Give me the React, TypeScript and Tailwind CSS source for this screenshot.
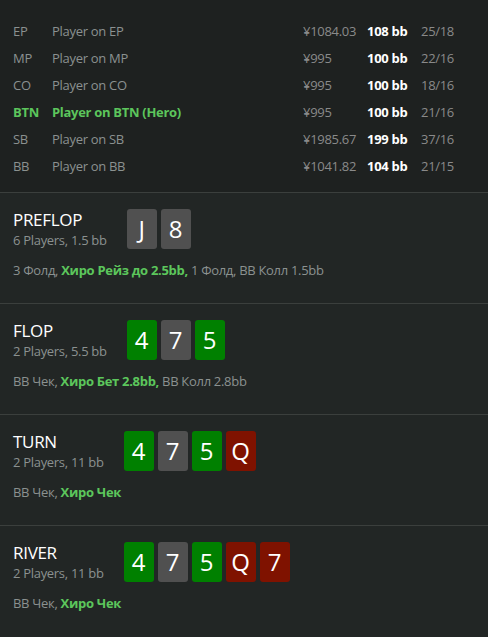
import React from 'react';

type Seat = {
  pos: string;
  name: string;
  stack: string;
  bb: string;
  stats: string;
  hero?: boolean;
};

type Card = { rank: string; color: 'gray' | 'green' | 'red' };

type Street = {
  title: string;
  info: string;
  cards: Card[];
  actions: { text: string; hero?: boolean }[];
};

const seats: Seat[] = [
  { pos: 'EP', name: 'Player on EP', stack: '¥1084.03', bb: '108 bb', stats: '25/18' },
  { pos: 'MP', name: 'Player on MP', stack: '¥995', bb: '100 bb', stats: '22/16' },
  { pos: 'CO', name: 'Player on CO', stack: '¥995', bb: '100 bb', stats: '18/16' },
  { pos: 'BTN', name: 'Player on BTN (Hero)', stack: '¥995', bb: '100 bb', stats: '21/16', hero: true },
  { pos: 'SB', name: 'Player on SB', stack: '¥1985.67', bb: '199 bb', stats: '37/16' },
  { pos: 'BB', name: 'Player on BB', stack: '¥1041.82', bb: '104 bb', stats: '21/15' },
];

const board: Card[] = [
  { rank: '4', color: 'green' },
  { rank: '7', color: 'gray' },
  { rank: '5', color: 'green' },
  { rank: 'Q', color: 'red' },
  { rank: '7', color: 'red' },
];

const streets: Street[] = [
  {
    title: 'PREFLOP',
    info: '6 Players, 1.5 bb',
    cards: [
      { rank: 'J', color: 'gray' },
      { rank: '8', color: 'gray' },
    ],
    actions: [
      { text: '3 Фолд, ' },
      { text: 'Хиро Рейз до 2.5bb,', hero: true },
      { text: ' 1 Фолд, BB Колл 1.5bb' },
    ],
  },
  {
    title: 'FLOP',
    info: '2 Players, 5.5 bb',
    cards: board.slice(0, 3),
    actions: [
      { text: 'BB Чек, ' },
      { text: 'Хиро Бет 2.8bb,', hero: true },
      { text: ' BB Колл 2.8bb' },
    ],
  },
  {
    title: 'TURN',
    info: '2 Players, 11 bb',
    cards: board.slice(0, 4),
    actions: [{ text: 'BB Чек, ' }, { text: 'Хиро Чек', hero: true }],
  },
  {
    title: 'RIVER',
    info: '2 Players, 11 bb',
    cards: board,
    actions: [{ text: 'BB Чек, ' }, { text: 'Хиро Чек', hero: true }],
  },
];

const cardBg: Record<Card['color'], string> = {
  gray: 'bg-[#505050]',
  green: 'bg-[#008000]',
  red: 'bg-[#7f1200]',
};

function PlayingCard({ card }: { card: Card }) {
  return (
    <div
      className={`w-[30px] h-[40px] rounded-[3px] flex items-center justify-center text-white text-[24px] leading-none ${cardBg[card.color]}`}
    >
      {card.rank}
    </div>
  );
}

export default function App() {
  return (
    <div
      className="w-[488px] h-[637px] overflow-hidden bg-[#222625] text-[13px] tracking-[-0.3px]"
      style={{ fontFamily: '"Open Sans", "Noto Sans", sans-serif' }}
    >
      {/* Seats */}
      <div className="bg-[#1e2120] pl-[13px] pr-[17px] pt-[18px] pb-[12px]">
        {seats.map((s) => (
          <div
            key={s.pos}
            className="grid grid-cols-[39px_1fr_64px_54px_50px] h-[27px] items-center"
          >
            <span className={s.hero ? 'text-[#5cc65c] font-bold' : 'text-[#8b9190]'}>{s.pos}</span>
            <span className={s.hero ? 'text-[#5cc65c] font-bold' : 'text-[#8b9190]'}>{s.name}</span>
            <span className="text-[#8a8a8a]">{s.stack}</span>
            <span className="text-white font-bold">{s.bb}</span>
            <span className="text-[#8a8a8a]">{s.stats}</span>
          </div>
        ))}
      </div>

      {/* Streets */}
      {streets.map((st) => (
        <div key={st.title} className="border-t border-[#3b3f3d] px-[13px] pt-4 pb-6">
          <div className="flex items-start gap-5">
            <div className="flex flex-col">
              <span className="text-white text-[17px] leading-[22px]">{st.title}</span>
              <span className="text-[#8b9190] leading-[18px]">{st.info}</span>
            </div>
            <div className="flex gap-[4px] tracking-normal">
              {st.cards.map((c, i) => (
                <PlayingCard key={i} card={c} />
              ))}
            </div>
          </div>
          <div className="mt-3 leading-[18px] text-[#8b9190]">
            {st.actions.map((a, i) => (
              <span key={i} className={a.hero ? 'text-[#5cc65c] font-bold' : ''}>
                {a.text}
              </span>
            ))}
          </div>
        </div>
      ))}
    </div>
  );
}
